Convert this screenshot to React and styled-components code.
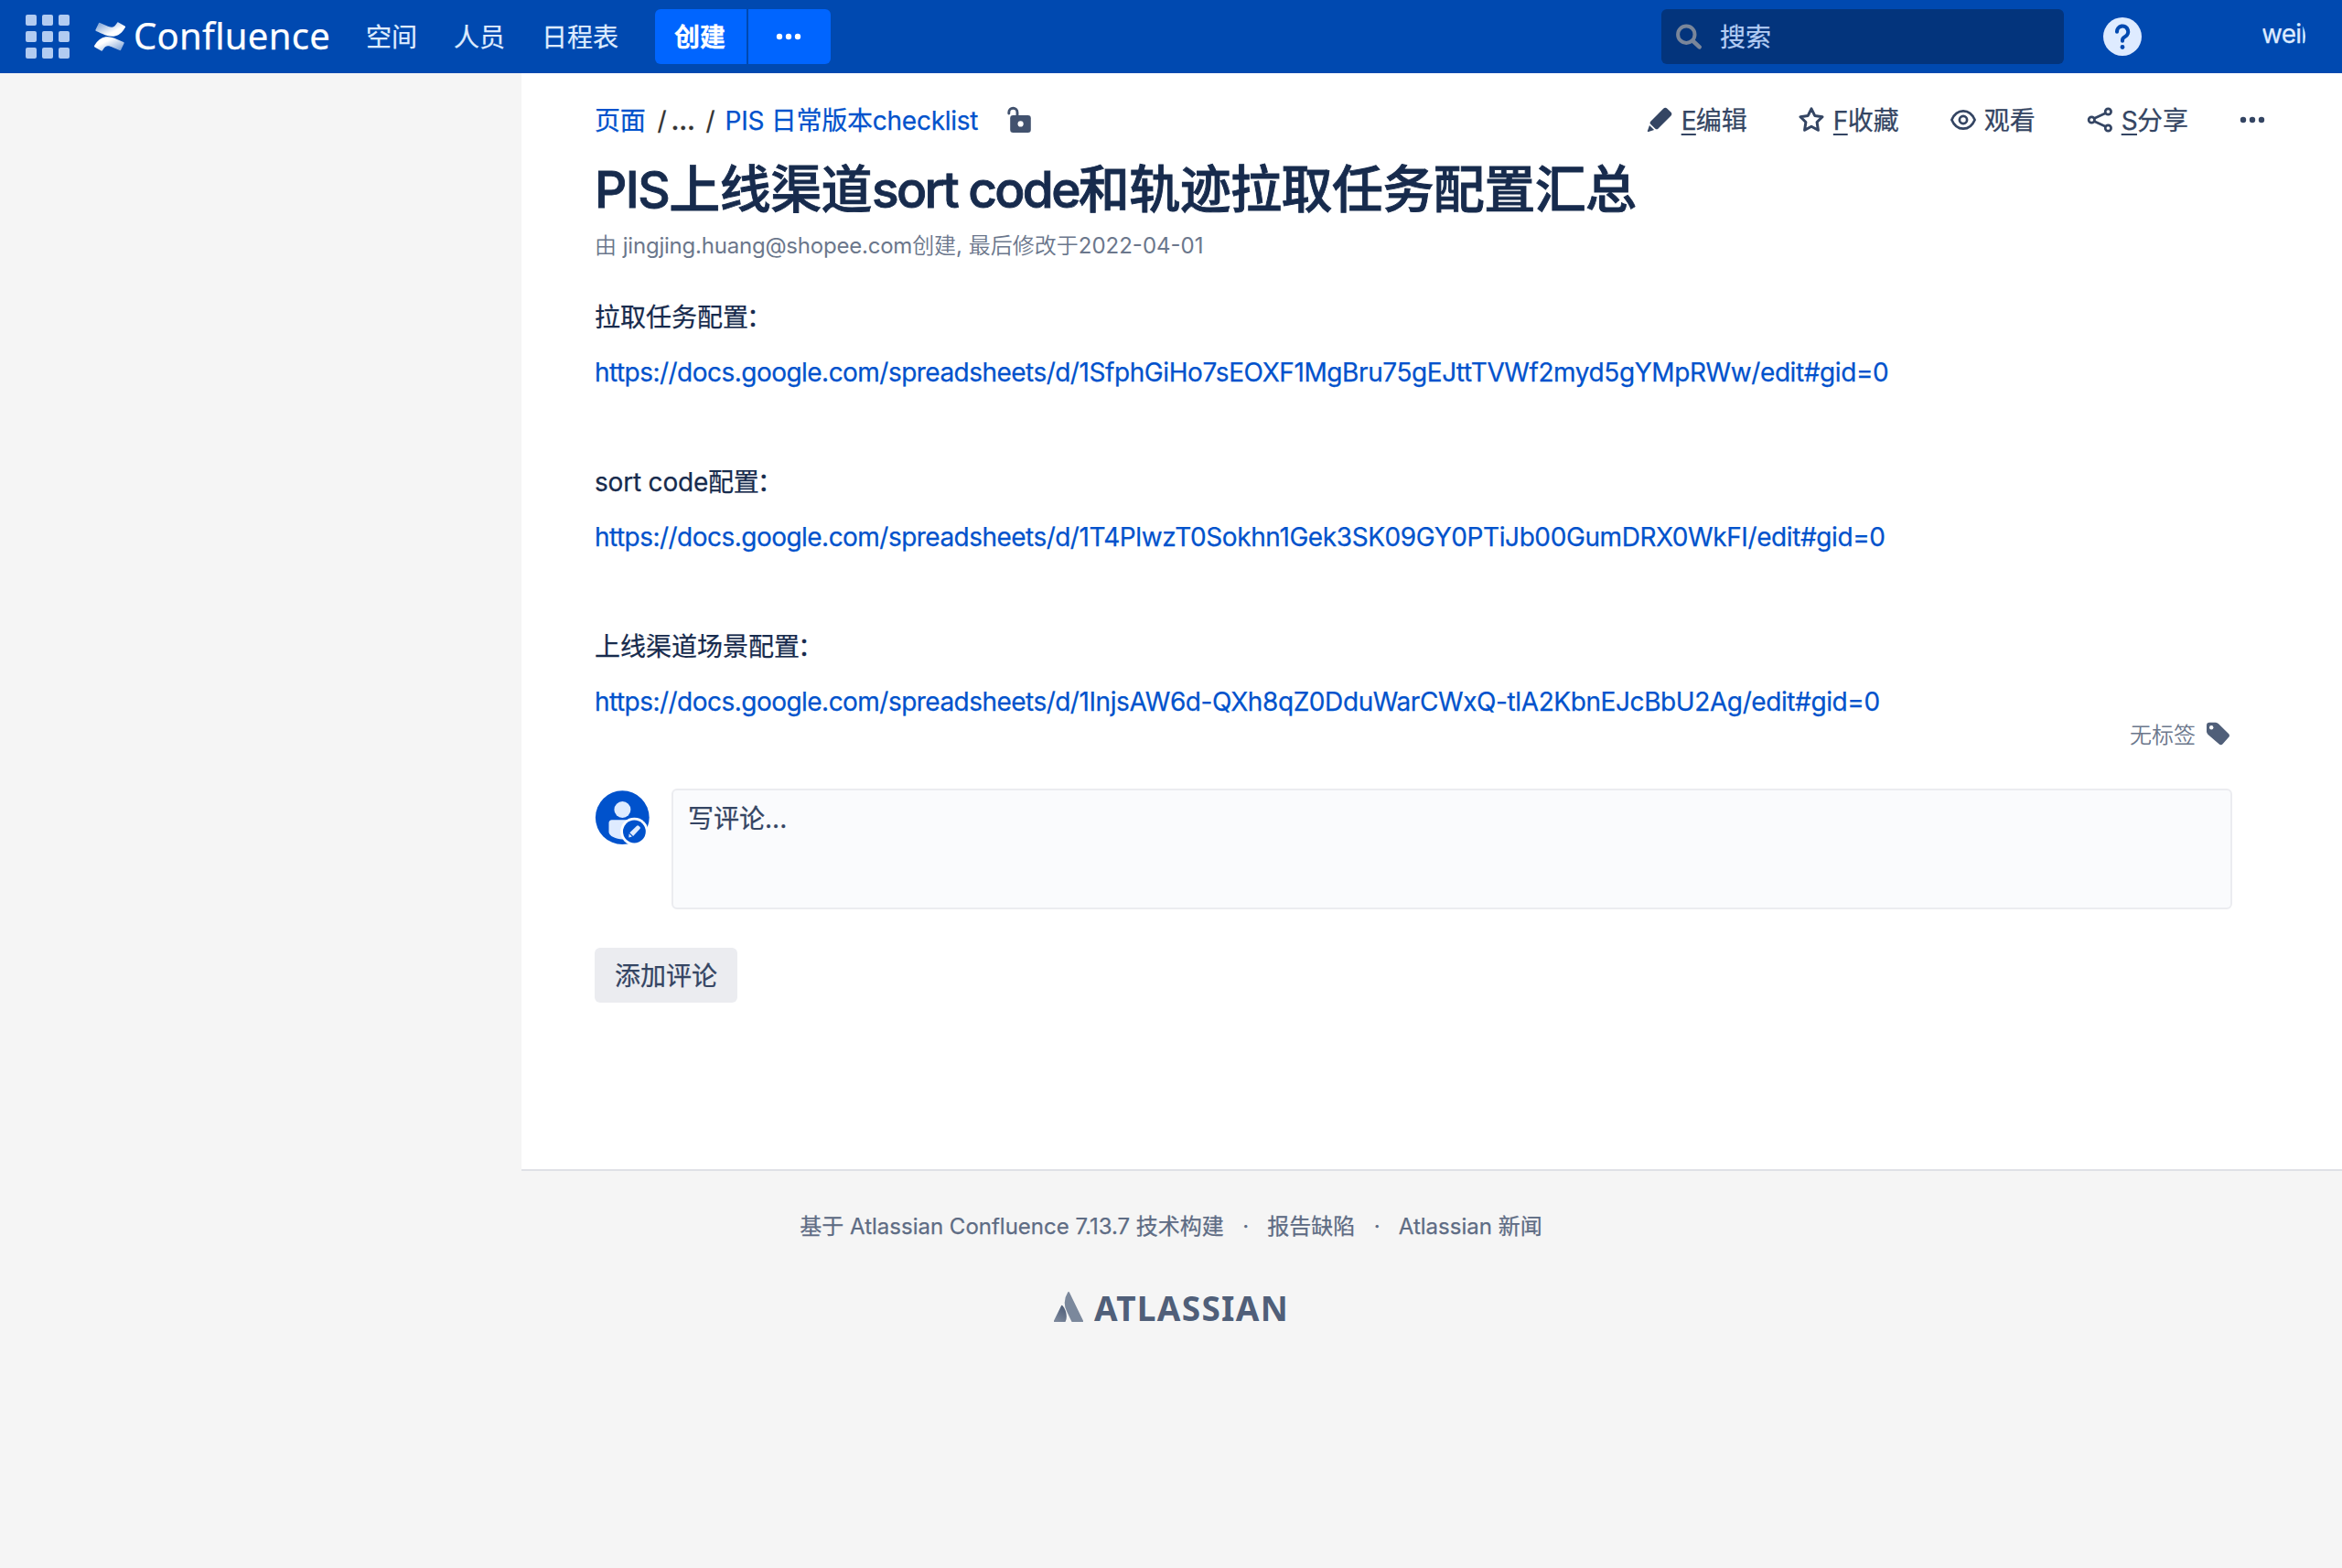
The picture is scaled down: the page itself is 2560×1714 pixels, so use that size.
import React from 'react';
import styled, { createGlobalStyle } from 'styled-components';

const sans = 'Inter, "Noto Sans CJK SC", sans-serif';
const sansLight = 'Inter, "Noto Sans CJK SC DemiLight", "Noto Sans CJK SC Light", "Noto Sans CJK SC", sans-serif';

const GlobalStyle = createGlobalStyle`
  * { box-sizing: border-box; }
  body {
    margin: 0;
    background: #f5f5f5;
    color: #172b4d;
    font-family: ${sans};
    font-size: 28px;
    line-height: 40px;
    -webkit-text-stroke: 0.25px currentColor;
  }
  a { color: inherit; text-decoration: none; }
  p, h1 { margin: 0; }
  svg { display: block; flex: none; }
`;

const Page = styled.div`
  min-height: 1714px;
  overflow: hidden;
`;

/* Header */
const Header = styled.header`
  display: flex;
  align-items: center;
  justify-content: space-between;
  height: 80px;
  padding: 0 40px 0 28px;
  background: #0049b0;
  color: #deebff;
`;

const HeaderSide = styled.div`
  display: flex;
  align-items: center;
`;

const AppGrid = styled.div`
  display: grid;
  grid-template-columns: repeat(3, 12px);
  grid-auto-rows: 12px;
  gap: 6px;
`;

const AppDot = styled.span`
  border-radius: 2px;
  background: #b2cbf1;
`;

const Brand = styled.a`
  display: flex;
  align-items: center;
  gap: 9px;
  width: 256px;
  margin-left: 27px;
`;

const BrandName = styled.span`
  padding-bottom: 3px;
  color: #fff;
  font-family: 'Noto Sans', sans-serif;
  font-size: 40px;
  letter-spacing: 0.3px;
  line-height: 74px;
`;

const Nav = styled.nav`
  display: flex;
  gap: 40px;
  margin-left: 41px;
  padding-top: 2px;
`;

const CreateGroup = styled.div`
  display: flex;
  gap: 2px;
  height: 60px;
  margin-left: 40px;
  border-radius: 6px;
  overflow: hidden;
`;

const CreateButton = styled.button`
  display: flex;
  align-items: center;
  justify-content: center;
  width: ${(p) => p.$width}px;
  padding: ${(p) => p.$top || 0}px 2px 0 0;
  border: 0;
  background: #0065ff;
  color: #fff;
  font: 700 28px/40px ${sans};
`;

const SearchBox = styled.div`
  display: flex;
  align-items: center;
  gap: 19px;
  width: 440px;
  height: 60px;
  padding-left: 16px;
  border-radius: 6px;
  background: #03347c;
  color: #b3ccf3;
`;

const SearchHint = styled.span`
  padding-top: 2px;
`;

const HelpLink = styled.a`
  margin-left: 43px;
`;

const Avatar = styled.div`
  width: 48px;
  height: 48px;
  margin-left: 131px;
  border-radius: 50%;
  overflow: hidden;
  letter-spacing: -0.75px;
  line-height: 42px;
  white-space: nowrap;
`;

/* Body */
const Columns = styled.div`
  display: flex;
`;

const Sidebar = styled.aside`
  flex: none;
  width: 570px;
`;

const Main = styled.main`
  flex: 1;
  height: 1200px;
  padding: 32px 120px 0 80px;
  border-bottom: 2px solid #dfe1e6;
  background: #fff;
`;

const Toolbar = styled.div`
  display: flex;
  align-items: center;
  justify-content: space-between;
  height: 40px;
  margin-right: -36px;
`;

const Breadcrumbs = styled.div`
  display: flex;
  align-items: center;
  color: #0052cc;
`;

const Crumb = styled.a`
  letter-spacing: -0.25px;
`;

const Slash = styled.span`
  width: ${(p) => p.$width}px;
  padding-left: ${(p) => p.$indent}px;
  color: #333;
`;

const Ellipsis = styled.span`
  width: 37px;
  color: #333;
  font-weight: 600;
  letter-spacing: -0.2px;
`;

const LockLink = styled.a`
  margin-left: 31px;
  padding-bottom: 2px;
`;

const Actions = styled.div`
  display: flex;
  align-items: center;
  gap: 56px;
  color: #344563;
`;

const Action = styled.a`
  display: flex;
  align-items: center;
  gap: ${(p) => p.$gap || 10}px;

  svg { margin-bottom: 2px; }
`;

const AccessKey = styled.span`
  letter-spacing: -0.7px;
  text-decoration: underline;
  text-decoration-thickness: 2px;
  text-underline-offset: 4px;
  text-decoration-skip-ink: none;
`;

const Title = styled.h1`
  margin-top: 23px;
  font-size: 56px;
  font-weight: 500;
  letter-spacing: -0.58px;
  line-height: 64px;
  white-space: nowrap;
  -webkit-text-stroke-width: 0.9px;
`;

const TitleLatin = styled.span`
  font-size: 55px;
  letter-spacing: ${(p) => p.$track}px;
`;

const Meta = styled.div`
  margin-top: 15px;
  color: #6b778c;
  font-family: ${sansLight};
  font-size: 24px;
  line-height: 30px;
  -webkit-text-stroke-width: 0;
`;

const Author = styled.a`
  letter-spacing: -0.22px;
`;

const Content = styled.article`
  display: flex;
  flex-direction: column;
  gap: 20px;
  margin-top: 43px;
`;

const Paragraph = styled.p`
  height: 40px;
  letter-spacing: ${(p) => (p.$latin ? '-0.2px' : 'normal')};
`;

const Colon = styled.span`
  margin-left: -2px;
`;

const DocLink = styled.a`
  color: #0052cc;
  letter-spacing: -0.405px;
`;

const Host = styled.span`
  letter-spacing: -0.53px;
`;

const Labels = styled.div`
  display: flex;
  align-items: center;
  justify-content: flex-end;
  gap: 11px;
  margin-top: 1px;
  padding-right: 1px;
  color: #6b778c;
  font-family: ${sansLight};
  font-size: 24px;
  line-height: 30px;
  -webkit-text-stroke-width: 0;
`;

const LabelText = styled.span`
  padding-top: 2px;
  line-height: 28px;
`;

const CommentRow = styled.section`
  display: flex;
  gap: 24px;
  margin-top: 44px;
`;

const CommentAvatar = styled.div`
  padding-top: 2px;
`;

const CommentBox = styled.div`
  flex: 1;
  height: 132px;
  padding: 11px 16px;
  border: 2px solid #ebecf0;
  border-radius: 6px;
  background: #fafbfd;
  color: #344563;
`;

const AddButton = styled.button`
  width: 156px;
  height: 60px;
  margin-top: 42px;
  padding: 2px 0 0;
  border: 0;
  border-radius: 6px;
  background: #ebecf0;
  color: #344563;
  font: 400 28px/40px ${sans};
`;

/* Footer */
const Footer = styled.footer`
  display: flex;
  flex-direction: column;
  align-items: center;
  padding-top: 46px;
  color: #5e6c84;
  font-size: 24px;
  line-height: 30px;
`;

const FooterLinks = styled.div`
  display: flex;
`;

const Separator = styled.span`
  width: 47.5px;
  text-align: center;
`;

const AtlassianLink = styled.a`
  display: flex;
  align-items: center;
  gap: 12px;
  height: 40px;
  margin-top: 54px;
  padding-left: 1px;
  color: #505f79;

  svg { margin-bottom: 3px; }
`;

const AtlassianName = styled.span`
  font-family: 'Noto Sans', sans-serif;
  font-size: 37px;
  font-weight: 700;
  letter-spacing: 1.3px;
  line-height: 40px;
  -webkit-text-stroke-width: 0;
`;

const ConfluenceMark = () => (
  <svg width="34" height="32" viewBox="0 0 24 24" preserveAspectRatio="none">
    <defs>
      <linearGradient id="lower" x1="0.95" y1="0.9" x2="0.3" y2="0.3">
        <stop offset="0" stopColor="#fff" stopOpacity="0.5" />
        <stop offset="0.9" stopColor="#fff" />
      </linearGradient>
      <linearGradient id="upper" x1="0.05" y1="0.1" x2="0.7" y2="0.7">
        <stop offset="0" stopColor="#fff" stopOpacity="0.5" />
        <stop offset="0.9" stopColor="#fff" />
      </linearGradient>
    </defs>
    <path
      fill="url(#lower)"
      d="M.87 18.257c-.248.382-.53.875-.763 1.245a.764.764 0 0 0 .255 1.04l4.965 3.054a.764.764 0 0 0 1.058-.26c.199-.332.454-.763.733-1.221 1.967-3.247 3.945-2.853 7.508-1.146l4.957 2.337a.764.764 0 0 0 1.028-.382l2.364-5.346a.764.764 0 0 0-.382-1 599.851 599.851 0 0 1-4.965-2.361C10.911 10.97 5.224 11.185.87 18.257z"
    />
    <path
      fill="url(#upper)"
      d="M23.131 5.743c.249-.405.531-.875.764-1.25a.764.764 0 0 0-.256-1.034L18.675.404a.764.764 0 0 0-1.058.26c-.195.335-.451.763-.734 1.225-1.966 3.246-3.945 2.85-7.508 1.146L4.437.694a.764.764 0 0 0-1.027.382L1.046 6.422a.764.764 0 0 0 .382 1c1.039.49 3.105 1.467 4.965 2.361 6.698 3.246 12.392 3.029 16.738-4.04z"
    />
  </svg>
);

const MoreDots = () => (
  <svg width="28" height="8" viewBox="0 0 28 8" fill="currentColor">
    <circle cx="4" cy="4" r="3.2" />
    <circle cx="14" cy="4" r="3.2" />
    <circle cx="24" cy="4" r="3.2" />
  </svg>
);

const SearchIcon = () => (
  <svg width="29" height="28" viewBox="0 0 29 28" fill="none" stroke="#7a869a" strokeLinecap="round">
    <circle cx="11.3" cy="11.7" r="9.2" strokeWidth="4" />
    <path d="M18.5 18.8 25.6 25.4" strokeWidth="4.6" />
  </svg>
);

const HelpIcon = () => (
  <svg width="42" height="42" viewBox="0 0 42 42">
    <circle cx="21" cy="21" r="21" fill="#deebff" />
    <path
      d="M15 15.8a6.1 6.1 0 1 1 9 5.2c-2 1.1-3 2-3 3.8v.9"
      fill="none"
      stroke="#0049b0"
      strokeWidth="4.1"
      strokeLinecap="round"
    />
    <circle cx="21" cy="32.5" r="2.4" fill="#0049b0" />
  </svg>
);

const LockIcon = () => (
  <svg width="28" height="30" viewBox="0 0 28 30">
    <path d="M2.8 8V6.9a4.6 4.6 0 0 1 9.2 0V13" fill="none" stroke="#42526e" strokeWidth="2.9" strokeLinecap="round" />
    <rect x="4.2" y="10" width="22.6" height="19" rx="3.2" fill="#42526e" />
    <circle cx="15.6" cy="19.4" r="3.1" fill="#fff" />
  </svg>
);

const PencilIcon = () => (
  <svg width="28" height="28" viewBox="0 0 28 28" fill="currentColor">
    <path d="M18.2 1.7a3 3 0 0 1 4.2 0l3.9 3.9a3 3 0 0 1 0 4.2L12.6 23.5a2.5 2.5 0 0 1-3.5 0l-4.6-4.6a2.5 2.5 0 0 1 0-3.5z" />
    <path d="M3 19.9 8.1 25 2 27.1c-.8.2-1.3-.3-1.1-1.1z" />
  </svg>
);

const StarIcon = () => (
  <svg width="28" height="28" viewBox="0 0 28 28" fill="none" stroke="currentColor" strokeWidth="3" strokeLinejoin="round">
    <path d="M14 1.9 17.7 9.4 26 10.7 20.1 16.5 21.4 25.3 14 21.2 6.6 25.3 7.9 16.5 2 10.7 10.3 9.4Z" />
  </svg>
);

const EyeIcon = () => (
  <svg width="28" height="24" viewBox="0 0 28 24" fill="none" stroke="currentColor" strokeWidth="2.7">
    <path d="M1.4 12C4 5.7 8.5 2.3 14 2.3S24 5.7 26.6 12C24 18.3 19.5 21.7 14 21.7S4 18.3 1.4 12Z" strokeLinejoin="round" />
    <circle cx="14" cy="12" r="4.1" />
  </svg>
);

const ShareIcon = () => (
  <svg width="28" height="30" viewBox="0 0 28 30" fill="none" stroke="currentColor" strokeWidth="2.7">
    <path d="M8 13.5 21 7.5M8 16.5 21 22.5" />
    <circle cx="5.3" cy="15" r="3.2" />
    <circle cx="23.4" cy="6" r="3.2" />
    <circle cx="23.4" cy="24" r="3.2" />
  </svg>
);

const TagIcon = () => (
  <svg width="28" height="28" viewBox="0 0 28 28">
    <path
      fill="#505f79"
      d="M4.2.8h6.6c1.3.1 2.3.6 3.3 1.5l10.9 10.6c1.3 1.3 1.3 2.9 0 4.1l-6.4 7.3c-1.2 1.3-2.8 1.3-4.1 0L2.6 13.9C1.6 12.9 1.1 11.9 1 10.6V4C1 2 2.2.8 4.2.8Z"
    />
    <circle cx="6.2" cy="6.2" r="2.2" fill="#fff" />
  </svg>
);

const UserIcon = () => (
  <svg width="60" height="61" viewBox="0 0 60 61">
    <circle cx="30.3" cy="29.7" r="29.4" fill="#0052cc" />
    <circle cx="30.4" cy="21" r="9" fill="#deebff" />
    <path d="M15.5 35.5c0-2 1.3-3.3 3.3-3.3h23.4c2 0 3.3 1.3 3.3 3.3v10c0 4.2-8 8-15 8s-15-3.8-15-8z" fill="#deebff" />
    <circle cx="43.4" cy="45" r="15.2" fill="#fff" />
    <circle cx="43.4" cy="45" r="12.4" fill="#0052cc" />
    <path d="M46.1 38.7q1-1 2 0l1.4 1.4q1 1 0 2l-7.4 7.8-3.8-3.6zM37.6 47.3l3.3 3.2-3.6 1.1z" fill="#deebff" />
  </svg>
);

const AtlassianMark = () => (
  <svg width="32" height="33" viewBox="0 0 24 24" preserveAspectRatio="none">
    <defs>
      <linearGradient id="peak" x1="0.8" y1="0.1" x2="0.4" y2="1">
        <stop offset="0" stopColor="#505f79" />
        <stop offset="1" stopColor="#7a869a" />
      </linearGradient>
    </defs>
    <path
      fill="url(#peak)"
      d="M7.12 11.084a.683.683 0 0 0-1.16.126L.075 22.974a.703.703 0 0 0 .63 1.018h8.19a.678.678 0 0 0 .63-.39c1.767-3.65.696-9.203-2.406-12.52z"
    />
    <path
      fill="#7b889c"
      d="M11.434.386a15.515 15.515 0 0 0-.906 15.317l3.95 7.9a.703.703 0 0 0 .628.388h8.19a.703.703 0 0 0 .63-1.017L12.63.38a.664.664 0 0 0-1.196.006z"
    />
  </svg>
);

const host = 'https://docs.google.com/spreadsheets/d/';
const sections = [
  { heading: '拉取任务配置', path: '1SfphGiHo7sEOXF1MgBru75gEJttTVWf2myd5gYMpRWw/edit#gid=0' },
  { heading: 'sort code配置', latin: true, path: '1T4PlwzT0Sokhn1Gek3SK09GY0PTiJb00GumDRX0WkFI/edit#gid=0' },
  { heading: '上线渠道场景配置', path: '1InjsAW6d-QXh8qZ0DduWarCWxQ-tlA2KbnEJcBbU2Ag/edit#gid=0' },
];

export default function App() {
  return (
    <Page lang="zh-CN">
      <GlobalStyle />
      <Header>
        <HeaderSide>
          <AppGrid>
            {Array.from({ length: 9 }, (_, i) => (
              <AppDot key={i} />
            ))}
          </AppGrid>
          <Brand>
            <ConfluenceMark />
            <BrandName>Confluence</BrandName>
          </Brand>
          <Nav>
            <a>空间</a>
            <a>人员</a>
            <a>日程表</a>
          </Nav>
          <CreateGroup>
            <CreateButton $width={100} $top={2}>创建</CreateButton>
            <CreateButton $width={90}>
              <MoreDots />
            </CreateButton>
          </CreateGroup>
        </HeaderSide>
        <HeaderSide>
          <SearchBox>
            <SearchIcon />
            <SearchHint>搜索</SearchHint>
          </SearchBox>
          <HelpLink>
            <HelpIcon />
          </HelpLink>
          <Avatar>weil</Avatar>
        </HeaderSide>
      </Header>

      <Columns>
        <Sidebar />
        <Main>
          <Toolbar>
            <Breadcrumbs>
              <Crumb>页面</Crumb>
              <Slash $width={28} $indent={13}>/</Slash>
              <Ellipsis>...</Ellipsis>
              <Slash $width={22} $indent={1}>/</Slash>
              <Crumb>PIS 日常版本checklist</Crumb>
              <LockLink>
                <LockIcon />
              </LockLink>
            </Breadcrumbs>
            <Actions>
              <Action>
                <PencilIcon />
                <span><AccessKey>E</AccessKey>编辑</span>
              </Action>
              <Action>
                <StarIcon />
                <span><AccessKey>F</AccessKey>收藏</span>
              </Action>
              <Action $gap={9}>
                <EyeIcon />
                观看
              </Action>
              <Action>
                <ShareIcon />
                <span><AccessKey>S</AccessKey>分享</span>
              </Action>
              <Action>
                <MoreDots />
              </Action>
            </Actions>
          </Toolbar>

          <Title>
            <TitleLatin $track={-1.5}>PIS</TitleLatin>上线渠道
            <TitleLatin $track={-2.65}>sort code</TitleLatin>和轨迹拉取任务配置汇总
          </Title>
          <Meta>
            由 <Author>jingjing.huang@shopee.com</Author>创建, 最后修改于2022-04-01
          </Meta>

          <Content>
            {sections.map((s, i) => (
              <React.Fragment key={s.path}>
                {i > 0 && <Paragraph />}
                <Paragraph $latin={s.latin}>
                  {s.heading}
                  <Colon>：</Colon>
                </Paragraph>
                <Paragraph>
                  <DocLink>
                    <Host>{host}</Host>
                    {s.path}
                  </DocLink>
                </Paragraph>
              </React.Fragment>
            ))}
          </Content>

          <Labels>
            <LabelText>无标签</LabelText>
            <TagIcon />
          </Labels>

          <CommentRow>
            <CommentAvatar>
              <UserIcon />
            </CommentAvatar>
            <CommentBox>写评论...</CommentBox>
          </CommentRow>
          <AddButton>添加评论</AddButton>
        </Main>
      </Columns>

      <Footer>
        <FooterLinks>
          <a>基于 Atlassian Confluence 7.13.7 技术构建</a>
          <Separator>·</Separator>
          <a>报告缺陷</a>
          <Separator>·</Separator>
          <a>Atlassian 新闻</a>
        </FooterLinks>
        <AtlassianLink>
          <AtlassianMark />
          <AtlassianName>ATLASSIAN</AtlassianName>
        </AtlassianLink>
      </Footer>
    </Page>
  );
}
